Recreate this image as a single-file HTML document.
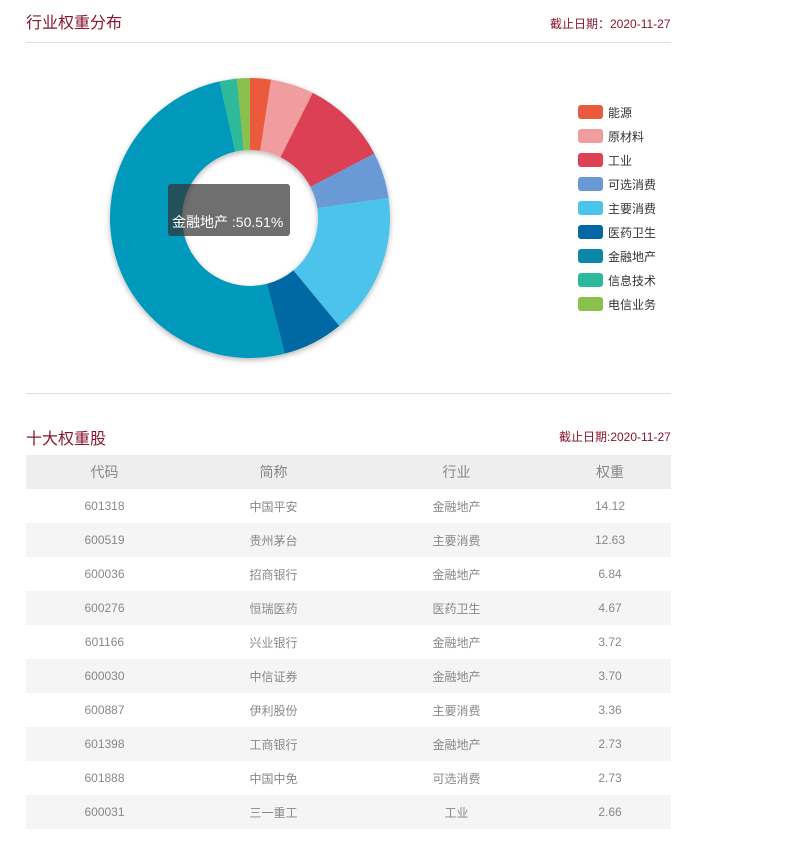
<!DOCTYPE html>
<html><head><meta charset="utf-8">
<style>
*{margin:0;padding:0;box-sizing:border-box}
body{width:799px;height:867px;background:#fff;font-family:"Liberation Sans","Noto Sans CJK SC",sans-serif;position:relative;overflow:hidden}
.t{position:absolute;color:#8b1530;font-size:16px}
.d{position:absolute;color:#8b1530;font-size:12px}
.line{position:absolute;left:26px;width:645px;height:1px;background:#ddd}
.lg{position:absolute;left:578px;font-size:12px;color:#333}
.lg div{height:24px;display:flex;align-items:center}
.lg span{display:inline-block;width:25px;height:14px;border-radius:3px;margin-right:5px}
table{position:absolute;left:26px;top:455px;width:645px;border-collapse:collapse;font-size:12px;color:#888}
th{height:34px;background:#eee;font-weight:normal;font-size:14px;color:#888}
td{height:34px;text-align:center}
tr.g td{background:#f5f5f5}
.tip{position:absolute;left:168px;top:184px;width:122px;height:52px;background:rgba(50,50,50,0.7);border-radius:3px;color:#fff;font-size:14px;padding:28px 0 0 4px;white-space:nowrap}
</style></head><body>
<div class="t" style="left:26px;top:9px">行业权重分布</div>
<div class="d" style="left:550px;top:15px">截止日期：2020-11-27</div>
<div class="line" style="top:42px"></div>
<svg id="pie" width="799" height="400" style="position:absolute;left:0;top:0">
<defs><filter id="sh" x="-20%" y="-20%" width="140%" height="140%"><feGaussianBlur in="SourceAlpha" stdDeviation="3"/><feOffset dx="0" dy="2"/><feComponentTransfer><feFuncA type="linear" slope="0.3"/></feComponentTransfer><feMerge><feMergeNode/><feMergeNode in="SourceGraphic"/></feMerge></filter></defs>
<g id="sl" filter="url(#sh)"></g>
</svg>
<script>
var d=[[2.4,"#ea5a3c"],[5,"#f19c9f"],[10,"#dc4155"],[5.3,"#6a9ad6"],[16.3,"#4bc3eb"],[7,"#0467a3"],[50.51,"#0599bb"],[2,"#2fb99b"],[1.49,"#8ac04b"]];
var cx=250,cy=218,R=140,r=68,a=0,s="";
function p(rad,ang){return [cx+rad*Math.sin(ang),cy-rad*Math.cos(ang)];}
d.forEach(function(x){var a0=a*Math.PI/50,a1=(a+x[0])*Math.PI/50;a+=x[0];var L=x[0]>50?1:0;
var o0=p(R,a0),o1=p(R,a1),i1=p(r,a1),i0=p(r,a0);
s+='<path fill="'+x[1]+'" d="M'+o0+' A'+R+','+R+' 0 '+L+' 1 '+o1+' L'+i1+' A'+r+','+r+' 0 '+L+' 0 '+i0+' Z"/>';});
document.getElementById("sl").innerHTML=s;
</script>
<div class="tip">金融地产 :50.51%</div>
<div class="lg" style="top:100px">
<div><span style="background:#ea5a3c"></span>能源</div>
<div><span style="background:#f19c9f"></span>原材料</div>
<div><span style="background:#dc4155"></span>工业</div>
<div><span style="background:#6a9ad6"></span>可选消费</div>
<div><span style="background:#4bc3eb"></span>主要消费</div>
<div><span style="background:#0467a3"></span>医药卫生</div>
<div><span style="background:#0a86a8"></span>金融地产</div>
<div><span style="background:#2fb99b"></span>信息技术</div>
<div><span style="background:#8ac04b"></span>电信业务</div>
</div>
<div class="line" style="top:393px"></div>
<div class="t" style="left:26px;top:425px">十大权重股</div>
<div class="d" style="left:559px;top:428px">截止日期:2020-11-27</div>
<table>
<tr><th style="width:157px">代码</th><th style="width:181px">简称</th><th style="width:185px">行业</th><th>权重</th></tr>
<tr><td>601318</td><td>中国平安</td><td>金融地产</td><td>14.12</td></tr>
<tr class="g"><td>600519</td><td>贵州茅台</td><td>主要消费</td><td>12.63</td></tr>
<tr><td>600036</td><td>招商银行</td><td>金融地产</td><td>6.84</td></tr>
<tr class="g"><td>600276</td><td>恒瑞医药</td><td>医药卫生</td><td>4.67</td></tr>
<tr><td>601166</td><td>兴业银行</td><td>金融地产</td><td>3.72</td></tr>
<tr class="g"><td>600030</td><td>中信证券</td><td>金融地产</td><td>3.70</td></tr>
<tr><td>600887</td><td>伊利股份</td><td>主要消费</td><td>3.36</td></tr>
<tr class="g"><td>601398</td><td>工商银行</td><td>金融地产</td><td>2.73</td></tr>
<tr><td>601888</td><td>中国中免</td><td>可选消费</td><td>2.73</td></tr>
<tr class="g"><td>600031</td><td>三一重工</td><td>工业</td><td>2.66</td></tr>
</table>
</body></html>
